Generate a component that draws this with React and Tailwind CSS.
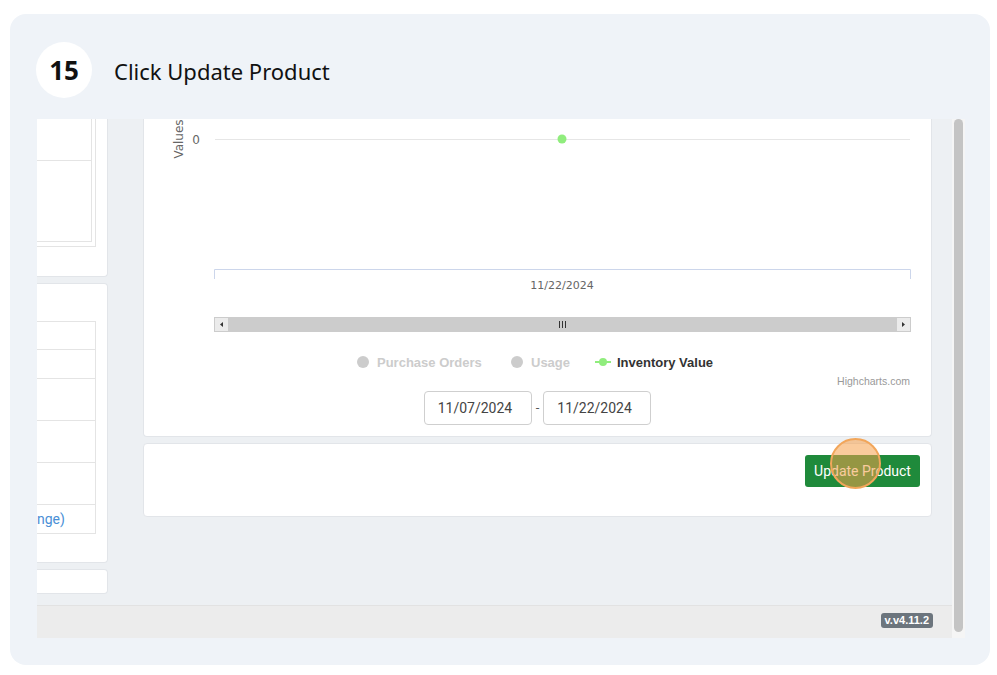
import React from "react";

const panel = "bg-white border border-[#e2e5e9]";

function LeftColumn() {
  const rows = [28, 29, 42, 42, 42, 28];
  return (
    <div className="flex w-[71px] shrink-0 flex-col gap-[6px]">
      <div className={`${panel} h-[158px] rounded-br-[4px] border-l-0 border-t-0`}>
        <div className="h-[128px] w-[59px] border-b border-r border-[#e4e4e4]">
          <div className="h-[123px] w-[55px] border-b border-r border-[#e4e4e4]">
            <div className="h-[42px] border-b border-[#e4e4e4]" />
          </div>
        </div>
      </div>
      <div className={`${panel} h-[280px] rounded-r-[4px] border-l-0 pt-[37px]`}>
        <div className="w-[59px] border-r border-t border-b border-[#e4e4e4]">
          {rows.map((h, i) => (
            <div
              key={i}
              style={{ height: h }}
              className={i < rows.length - 1 ? "border-b border-[#e4e4e4]" : "flex items-center"}
            >
              {i === rows.length - 1 && (
                <span className="font-['Roboto',sans-serif] text-[14px] leading-none text-[#4a8fd6]">nge)</span>
              )}
            </div>
          ))}
        </div>
      </div>
      <div className={`${panel} h-[25px] rounded-r-[4px] border-l-0`} />
    </div>
  );
}

function Chart() {
  return (
    <svg width="787" height="270" className="block font-['Liberation_Sans',Arial,sans-serif]">
      <text x="39" y="20" transform="rotate(-90 39 20)" textAnchor="middle" fontSize="12" fill="#666" fontFamily="DejaVu Sans, sans-serif">
        Values
      </text>
      <text x="56" y="24.5" textAnchor="end" fontSize="12" fill="#666" fontFamily="DejaVu Sans, sans-serif">
        0
      </text>
      <line x1="71" y1="20.5" x2="766" y2="20.5" stroke="#e6e6e6" />
      <circle cx="418" cy="20" r="4.5" fill="#90ed7d" />

      <path d="M70.5 160 V150.5 H766.5 V160" fill="none" stroke="#ccd6eb" />
      <text x="418" y="170" textAnchor="middle" fontSize="11" fill="#666" fontFamily="DejaVu Sans, sans-serif">
        11/22/2024
      </text>

      <rect x="70" y="198" width="697" height="15" fill="#cccccc" />
      <rect x="70.5" y="198.5" width="14" height="14" fill="#ebebeb" stroke="#cccccc" />
      <rect x="752.5" y="198.5" width="14" height="14" fill="#ebebeb" stroke="#cccccc" />
      <path d="M79 203 L76 205.5 L79 208 Z" fill="#333" />
      <path d="M758 203 L761 205.5 L758 208 Z" fill="#333" />
      <path d="M415.5 202 V209 M418.5 202 V209 M421.5 202 V209" stroke="#333" strokeWidth="1" />

      <circle cx="219" cy="243" r="6" fill="#cccccc" />
      <text x="233" y="248" fontSize="13" fontWeight="bold" fill="#cccccc">
        Purchase Orders
      </text>
      <circle cx="373" cy="243" r="6" fill="#cccccc" />
      <text x="387" y="248" fontSize="13" fontWeight="bold" fill="#cccccc">
        Usage
      </text>
      <line x1="451" y1="243" x2="467" y2="243" stroke="#90ed7d" strokeWidth="2" />
      <circle cx="459" cy="243" r="4" fill="#90ed7d" />
      <text x="473" y="248" fontSize="13" fontWeight="bold" fill="#333">
        Inventory Value
      </text>

      <text x="766" y="266" textAnchor="end" fontSize="10.5" fill="#999">
        Highcharts.com
      </text>
    </svg>
  );
}

function DateInput({ value }) {
  return (
    <div className="flex h-[34px] w-[108px] items-center rounded-[4px] border border-[#cfcfcf] bg-white pl-[13px] font-['Roboto',sans-serif] text-[14px] text-[#444]">
      {value}
    </div>
  );
}

function MainColumn() {
  return (
    <div className="flex w-[789px] shrink-0 flex-col gap-[6px]">
      <div className={`${panel} h-[318px] rounded-b-[4px] border-t-0`}>
        <Chart />
        <div className="mt-[2px] flex items-center justify-center gap-[4px]">
          <DateInput value="11/07/2024" />
          <span className="font-['Roboto',sans-serif] text-[13px] text-[#555]">-</span>
          <DateInput value="11/22/2024" />
        </div>
      </div>
      <div className={`${panel} relative flex h-[74px] justify-end rounded-[4px] pr-[11px] pt-[11px]`}>
        <button
          type="button"
          className="h-[32px] w-[115px] rounded-[3px] bg-[#1f8a3b] font-['Roboto',sans-serif] text-[14px] text-white"
        >
          Update Product
        </button>
        <div className="absolute left-[686px] top-[-6px] h-[51px] w-[51px] rounded-full border-2 border-[#f2a65a] bg-[#f5a04a]/55" />
      </div>
    </div>
  );
}

export default function App() {
  return (
    <div className="h-[675px] w-[997px] bg-white px-[10px] pt-[14px]">
      <div className="h-[651px] w-[980px] rounded-[16px] bg-[#eff3f8]">
        <div className="flex h-[105px] items-start pl-[26px] pt-[28px]">
          <div className="flex h-[56px] w-[56px] items-center justify-center rounded-full bg-white font-['Noto_Sans',sans-serif] text-[26px] font-bold text-[#111]">
            15
          </div>
          <p className="ml-[22px] mt-[13px] font-['Noto_Sans',sans-serif] text-[22px] text-[#111]">Click Update Product</p>
        </div>

        <div className="ml-[27px] flex h-[519px] w-[928px] overflow-hidden">
          <div className="flex w-[915px] flex-col bg-[#edf0f3]">
            <div className="flex h-[486px] gap-[35px]">
              <LeftColumn />
              <MainColumn />
            </div>
            <div className="flex h-[33px] items-start justify-end border-t border-[#e2e2e2] bg-[#ececec] pr-[19px] pt-[7px]">
              <span className="rounded-[3px] bg-[#6c757d] px-[4px] font-['Liberation_Sans',Arial,sans-serif] text-[11px] font-bold leading-[15px] text-white">
                v.v4.11.2
              </span>
            </div>
          </div>
          <div className="flex w-[13px] justify-center bg-[#f5f5f5] pb-[6px]">
            <div className="w-[9px] rounded-full bg-[#c4c4c4]" />
          </div>
        </div>
      </div>
    </div>
  );
}
